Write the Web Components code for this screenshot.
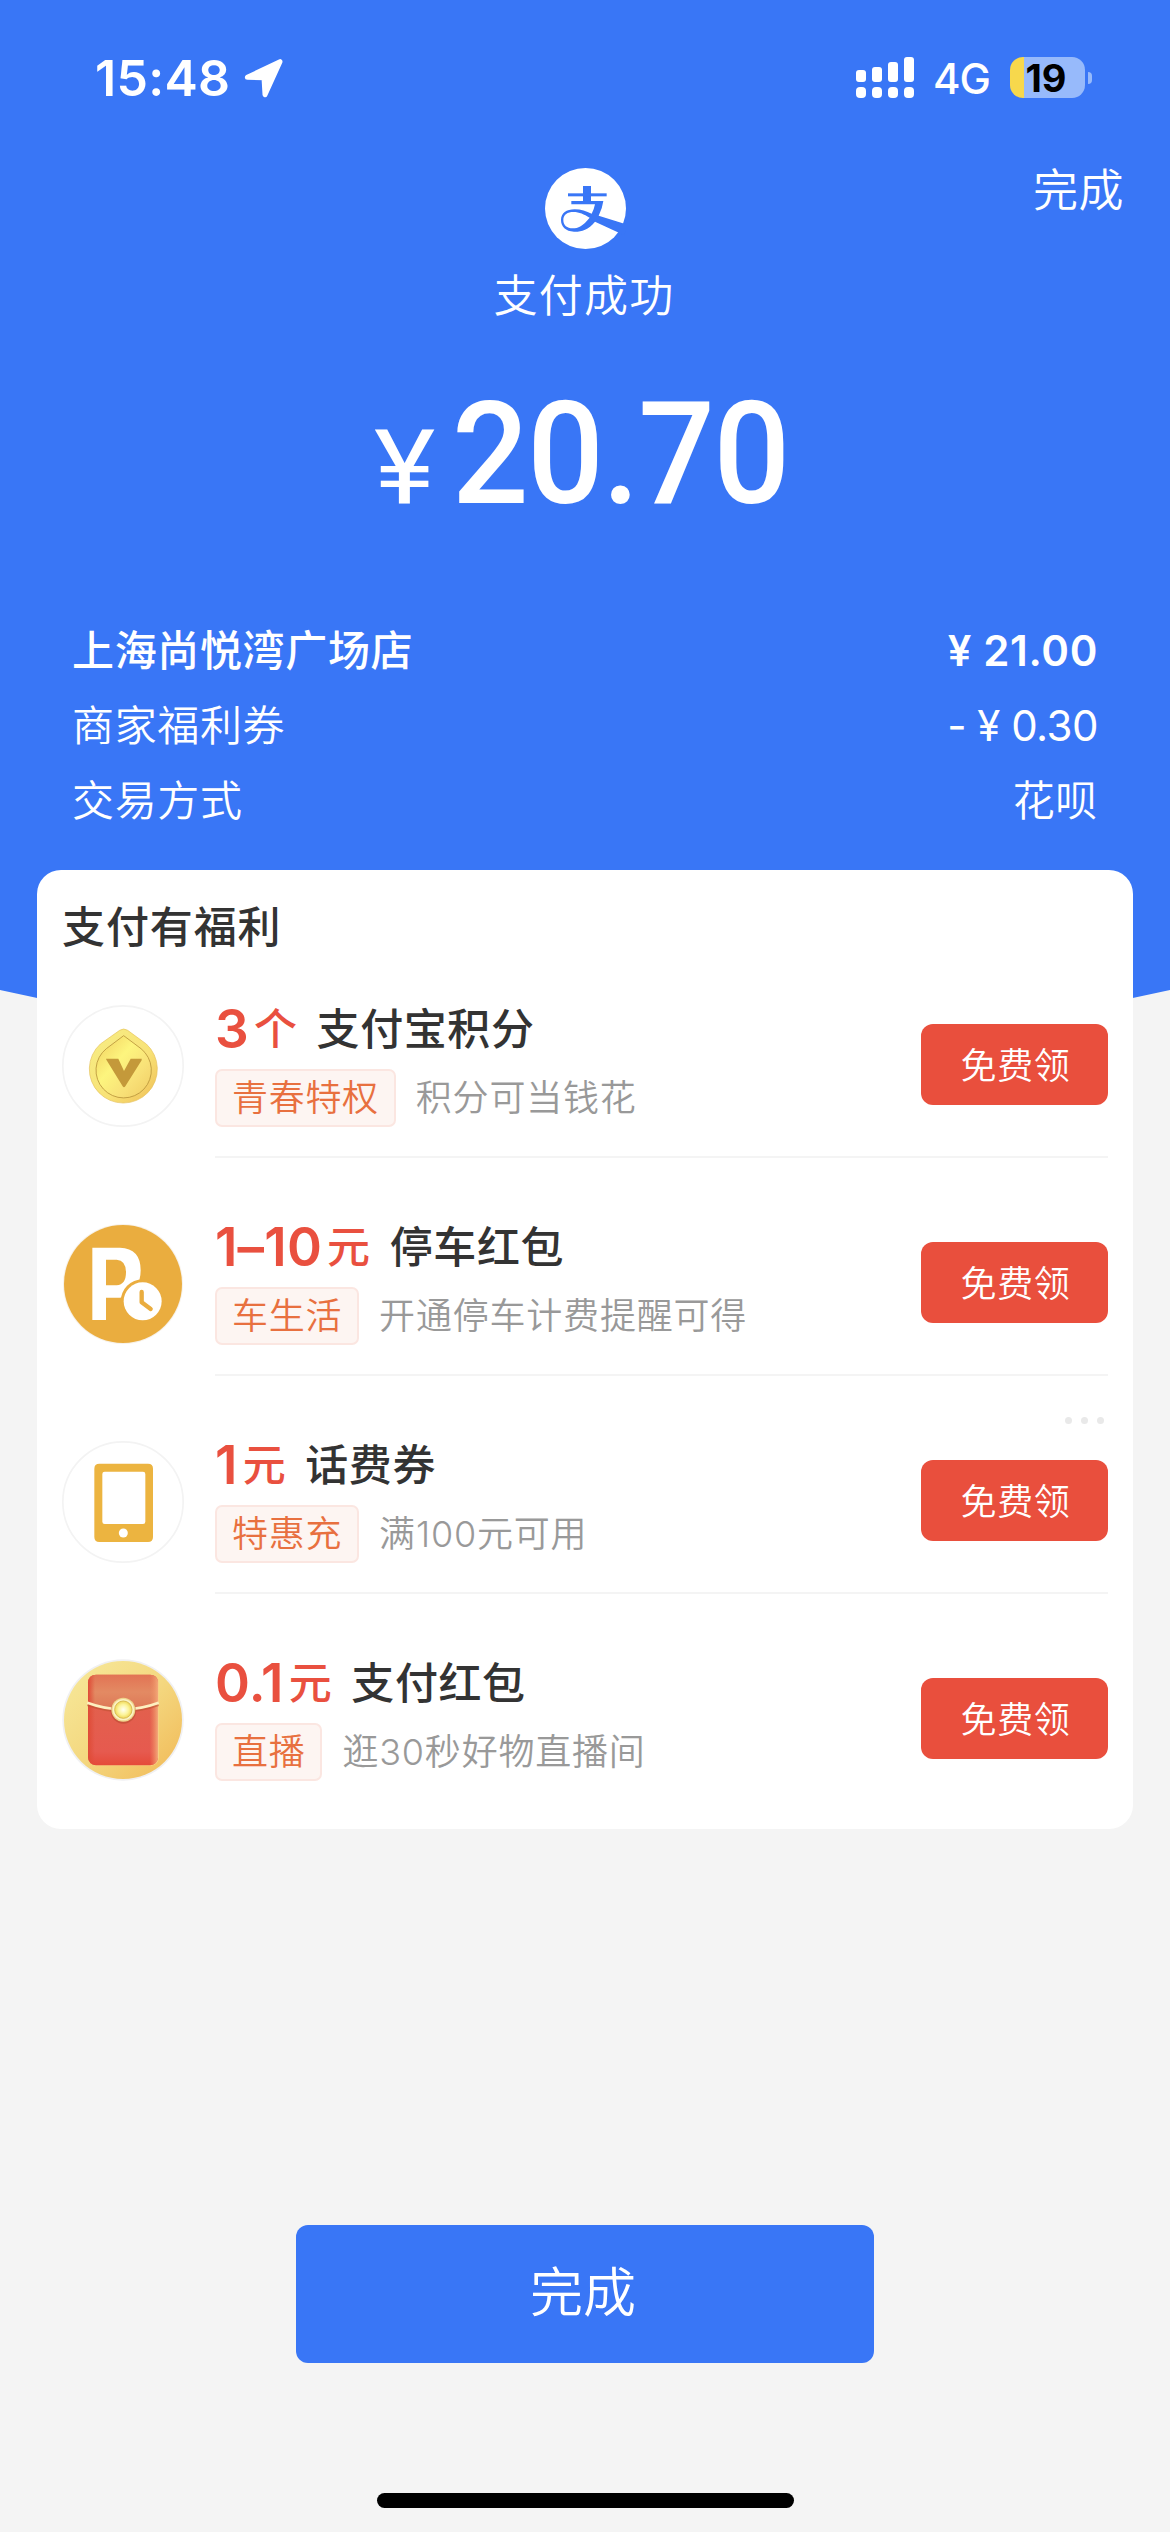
<!DOCTYPE html>
<html lang="zh-CN">
<head>
<meta charset="utf-8">
<title>支付成功</title>
<style>
html,body{margin:0;padding:0;background:#f4f4f4}
body{width:1170px;height:2532px;overflow:hidden;font-family:Inter,"Noto Sans CJK SC",sans-serif;color:#333}
</style>
</head>
<body>
<pay-screen></pay-screen>
<script>
const define = (name, html, setup) => {
  const tpl = document.createElement('template');
  tpl.innerHTML = html;
  customElements.define(name, class extends HTMLElement {
    constructor() {
      super();
      this.attachShadow({ mode: 'open' }).append(tpl.content.cloneNode(true));
    }
    connectedCallback() { if (setup) setup(this, this.shadowRoot); }
  });
};

define('status-bar', `
<style>
:host{display:flex;justify-content:space-between;height:156px;padding:0 78px 0 95px;box-sizing:border-box;color:#fff}
.left,.right{display:flex;align-items:center;height:155px}
.time{font-weight:600;font-size:50px;line-height:60px;letter-spacing:.3px}
.arrow{width:40px;height:40px;margin-left:14px}
.bars{width:58px;height:41px}
.net{font-weight:500;font-size:42px;line-height:50px;margin:2px 0 0 19px;letter-spacing:-1px}
.battery{display:flex;align-items:center;margin-left:20px}
.cell{width:75px;height:41px;border-radius:13px;box-sizing:border-box;padding-right:3px;text-align:center;background:linear-gradient(90deg,#f7d84c 14px,#97bafb 14px);color:#000;font-weight:700;font-size:38px;line-height:42px;letter-spacing:0}
.nub{width:4px;height:12px;margin-left:3px;border-radius:0 4px 4px 0;background:#97bafb}
</style>
<div class="left"><span class="time">15:48</span>
<svg class="arrow" viewBox="0 0 120 120"><path d="M10 58 108 11 63 110 60 59z" fill="#fff" stroke="#fff" stroke-width="15" stroke-linejoin="round"/></svg></div>
<div class="right">
<svg class="bars" viewBox="0 0 58 41" fill="#fff">
<rect x="0" y="13" width="10" height="12" rx="3"/><rect x="16" y="10" width="10" height="15" rx="3"/><rect x="32" y="5" width="10" height="20" rx="3"/><rect x="48" y="0" width="10" height="25" rx="3"/>
<rect x="0" y="30" width="10" height="11" rx="4"/><rect x="16" y="30" width="10" height="11" rx="4"/><rect x="32" y="30" width="10" height="11" rx="4"/><rect x="48" y="30" width="10" height="11" rx="4"/></svg>
<span class="net">4G</span>
<div class="battery"><div class="cell">19</div><div class="nub"></div></div>
</div>`);

define('alipay-logo', `
<style>:host{display:block;width:81px;height:81px}svg{display:block;width:100%;height:100%}</style>
<svg viewBox="552 54 243 243">
<circle cx="673.5" cy="175.5" r="121.5" fill="#fff"/>
<g fill="#3976f6">
<rect x="666" y="108" width="24" height="47"/><rect x="621" y="130" width="116" height="9"/>
<path d="M631 153H727Q724 176 713 197L800 224 790 256 702 215C681 241 658 246 639 245 614 244 600 230 600 210 600 190 616 178 641 178 660 178 676 184 692 191Q699 179 702 163H631z"/></g>
<path d="M686 203C666 228 651 235 635 235 618 235 607 226 607 210 607 194 620 186 637 186 656 186 668 193 686 203z" fill="#fff"/>
</svg>`);

define('detail-row', `
<style>
:host{display:flex;justify-content:space-between;align-items:center;height:75px;font-size:42px;line-height:75px;font-weight:350;letter-spacing:.65px;white-space:pre}
:host([strong]){font-weight:500}
.v{font-weight:400;letter-spacing:-.5px}
:host([strong]) .v{font-weight:600;letter-spacing:.65px}
</style><span><slot></slot></span><span class="v"><slot name="value"></slot></span>`);

define('pay-hero', `
<style>
:host{display:flex;flex-direction:column;align-items:center;position:relative;color:#fff;height:714px}
.nav{align-self:stretch;display:flex;justify-content:flex-end;height:0}
.nav a{font-size:45px;line-height:60px;font-weight:350;margin:5px 46px 0 0;letter-spacing:.5px}
alipay-logo{margin-top:12px}
h1{margin:17px 2px 0 0;font-size:44px;line-height:60px;font-weight:350;letter-spacing:1.3px}
.amount{display:flex;align-items:baseline;height:150px;margin:54px 0 0 -9px;font-family:Roboto,sans-serif;line-height:150px}
.cur,.num{display:block;transform-origin:left}
.cur{font-size:104px;font-weight:400;margin-right:16px;transform:translateX(6px) scaleX(1.12)}
.num{font-size:142px;font-weight:500;letter-spacing:-1.6px;transform:translateX(13px) scaleX(.95)}
.rows{align-self:stretch;margin:83px 72px 0 72px}
</style>
<div class="nav"><a>完成</a></div>
<alipay-logo></alipay-logo>
<h1>支付成功</h1>
<div class="amount"><span class="cur">¥</span><span class="num">20.70</span></div>
<div class="rows">
<detail-row strong>上海尚悦湾广场店<span slot="value">¥ 21.00</span></detail-row>
<detail-row>商家福利券<span slot="value">- ¥ 0.30</span></detail-row>
<detail-row>交易方式<span slot="value" style="font-weight:350;letter-spacing:.65px">花呗</span></detail-row>
</div>`);

const icons = {
coin: `<svg viewBox="0 0 366 366"><defs><linearGradient id="a" x1="0" y1="0" x2="1" y2="1"><stop offset="0" stop-color="#f7ee85"/><stop offset=".6" stop-color="#f8e276"/><stop offset="1" stop-color="#efbd55"/></linearGradient><linearGradient id="b" x1="0" y1="0" x2="1" y2="1"><stop offset="0" stop-color="#f0cb5c"/><stop offset=".4" stop-color="#fdf57e"/><stop offset=".7" stop-color="#f8e077"/><stop offset="1" stop-color="#f0cc62"/></linearGradient></defs>
<circle cx="183" cy="183" r="180.5" fill="#fff" stroke="#f3f3f3" stroke-width="5"/>
<path d="M173 76q12-8 24 0l56 41a102 102 0 1 1-138 0z" fill="url(#a)" stroke="#e6c15a" stroke-width="2"/>
<path d="M185 92l52 39a83 83 0 1 1-104 0z" fill="url(#b)" stroke="#b8943a" stroke-width="2.5"/>
<path d="M132 161h37l17 37 20-37h33v5l-49 78q-4 6-8 0l-49-80z" fill="#c4993a"/></svg>`,
parking: `<svg viewBox="0 0 366 366"><circle cx="183" cy="183" r="180" fill="#f7f2ea"/><circle cx="183" cy="183" r="177" fill="#eaad3f"/>
<path fill-rule="evenodd" d="M91 74H174Q236 76 236 142 236 173 221 197 205 222 173 224H132V291H91zM132 110V187H164Q192 185 192 148 192 112 164 110z" fill="#fff"/>
<circle cx="242" cy="235" r="66" fill="#eaad3f"/><circle cx="242" cy="235" r="57" fill="#fff"/><path d="M239 207v31l27 20" fill="none" stroke="#eaad3f" stroke-width="13" stroke-linecap="round" stroke-linejoin="round"/></svg>`,
phone: `<svg viewBox="0 0 366 366"><circle cx="183" cy="183" r="180.5" fill="#fff" stroke="#f3f3f3" stroke-width="5"/>
<path fill-rule="evenodd" d="M112 68H258q15 0 15 15V288q0 15-15 15H112q-15 0-15-15V83q0-15 15-15zM128 92q-7 0-7 7V242q0 7 7 7H243q7 0 7-7V99q0-7-7-7z" fill="#ecb440"/><circle cx="184" cy="276" r="13.5" fill="#fff"/></svg>`,
packet: `<svg viewBox="0 0 366 366"><defs><linearGradient id="g" x1="0" y1="0" x2="1" y2="1"><stop offset="0" stop-color="#f7ea9c"/><stop offset=".5" stop-color="#f4d880"/><stop offset="1" stop-color="#f1b855"/></linearGradient><linearGradient id="r" x1="0" y1="0" x2="0" y2="1"><stop offset="0" stop-color="#e57f55"/><stop offset=".35" stop-color="#e2604d"/><stop offset=".85" stop-color="#e65a4f"/><stop offset="1" stop-color="#e54a39"/></linearGradient><linearGradient id="h"><stop offset="0" stop-color="#df4b36"/><stop offset=".1" stop-color="#df4b36" stop-opacity="0"/><stop offset=".88" stop-color="#f08c60" stop-opacity="0"/><stop offset="1" stop-color="#f3a878"/></linearGradient><linearGradient id="f" x1="0" y1="0" x2="0" y2="1"><stop offset="0" stop-color="#e27354"/><stop offset=".5" stop-color="#e38a63"/><stop offset="1" stop-color="#dd7756"/></linearGradient><radialGradient id="p"><stop offset="0" stop-color="#fffff4"/><stop offset=".6" stop-color="#fcf49b"/><stop offset="1" stop-color="#efd858"/></radialGradient></defs>
<circle cx="183" cy="183" r="182" fill="#f0f0f2"/><circle cx="183" cy="183" r="177" fill="url(#g)"/>
<rect x="80" y="47" width="211" height="273" rx="24" fill="#f7cf82"/>
<rect x="78" y="47" width="210" height="272" rx="24" fill="url(#r)"/>
<path d="M78 132V71q0-24 24-24H264q24 0 24 24V132Q183 170 78 132z" fill="url(#f)"/>
<rect x="78" y="47" width="210" height="272" rx="24" fill="url(#h)"/>
<path d="M76 138Q183 176 290 138" fill="none" stroke="#b9502f" stroke-opacity=".55" stroke-width="7"/>
<path d="M76 131Q183 171 290 131" fill="none" stroke="#fdf0c0" stroke-width="8"/>
<circle cx="184" cy="156" r="38" fill="#a84428" opacity=".45"/><circle cx="184" cy="152" r="36" fill="#efd58c"/><circle cx="184" cy="152" r="32" fill="#fbf3c4"/><circle cx="184" cy="152" r="26" fill="url(#p)" stroke="#d9bd55" stroke-width="3"/></svg>`};

define('benefit-row', `
<style>
:host{display:flex;height:160px;position:relative}
.icon{width:122px;height:122px;margin:7px 31px 0 0;flex:none}
.icon svg{display:block;width:100%;height:100%}
.body{flex:1;display:flex;justify-content:space-between;border-bottom:2px solid #f4f4f4;box-sizing:border-box}
:host([last]) .body{border-color:transparent}
.title{display:flex;align-items:flex-start;height:62px;line-height:62px;font-size:43px;font-weight:500;letter-spacing:.6px;white-space:nowrap;color:#333}
.n{color:#e9503f;font-size:53px;font-weight:600;letter-spacing:.2px}
.u{color:#e9503f;margin:0 19px 0 5px}
.sub{display:flex;margin-top:9px;font-size:36px;line-height:54px;letter-spacing:.7px;font-weight:350;white-space:nowrap}
.tag{box-sizing:border-box;height:58px;border:2px solid #fbe6e1;background:#fdf5f2;border-radius:7px;padding:0 15px;color:#e8703f;margin-right:20px}
.desc{color:#999;line-height:58px;letter-spacing:.8px}
button{all:unset;margin-top:26px;width:187px;height:81px;border-radius:12px;background:#e94f3d;color:#fff;text-align:center;text-indent:2px;font-size:36px;line-height:84px;font-weight:350;letter-spacing:.7px}
.more{position:absolute;right:4px;top:-17px;display:none;gap:9px}
.more i{width:7px;height:7px;border-radius:50%;background:#e9e9e9}
:host([more]) .more{display:flex}
</style>
<div class="icon"></div>
<div class="body"><div>
<div class="title"><span class="n"></span><span class="u"></span><span><slot></slot></span></div>
<div class="sub"><span class="tag"></span><span class="desc"></span></div>
</div><button>免费领</button></div>
<div class="more"><i></i><i></i><i></i></div>`, (el, root) => {
  root.querySelector('.icon').innerHTML = icons[el.getAttribute('icon')];
  root.querySelector('.n').textContent = el.getAttribute('amount');
  root.querySelector('.u').textContent = el.getAttribute('unit');
  root.querySelector('.tag').textContent = el.getAttribute('tag');
  root.querySelector('.desc').textContent = el.getAttribute('desc');
});

define('benefit-card', `
<style>
:host{display:flex;flex-direction:column;gap:58px;position:relative;box-sizing:border-box;width:1096px;height:959px;margin:0 37px;padding:35px 25px 17px;background:#fff;border-radius:24px}
h2{margin:0 0 -9px;font-size:43px;line-height:44px;font-weight:500;letter-spacing:.9px}
</style><h2>支付有福利</h2><slot></slot>`);

define('done-button', `
<style>:host{display:block;box-sizing:border-box;width:578px;height:138px;margin:396px auto 0;padding-right:4px;border-radius:12px;background:#3976f6;color:#fff;text-align:center;font-size:53px;line-height:137px;font-weight:350}</style><slot></slot>`);

define('pay-screen', `
<style>
:host{display:flex;flex-direction:column;position:relative;width:1170px;height:2532px;overflow:hidden;background:#f4f4f4}
.bg{position:absolute;left:0;top:0;width:1170px;height:1080px}
status-bar{position:relative}
.home{width:417px;height:15px;border-radius:8px;background:#000;margin:130px auto 0}
</style>
<svg class="bg" viewBox="0 0 1170 1080"><path d="M0 0H1170V990Q585 1120 0 990z" fill="#3976f6"/></svg>
<status-bar></status-bar>
<pay-hero></pay-hero>
<benefit-card>
<benefit-row icon="coin" amount="3" unit="个" tag="青春特权" desc="积分可当钱花">支付宝积分</benefit-row>
<benefit-row icon="parking" amount="1–10" unit="元" tag="车生活" desc="开通停车计费提醒可得">停车红包</benefit-row>
<benefit-row icon="phone" amount="1" unit="元" tag="特惠充" desc="满100元可用" more>话费券</benefit-row>
<benefit-row icon="packet" amount="0.1" unit="元" tag="直播" desc="逛30秒好物直播间" last>支付红包</benefit-row>
</benefit-card>
<done-button>完成</done-button>
<div class="home"></div>`);
</script>
</body>
</html>
